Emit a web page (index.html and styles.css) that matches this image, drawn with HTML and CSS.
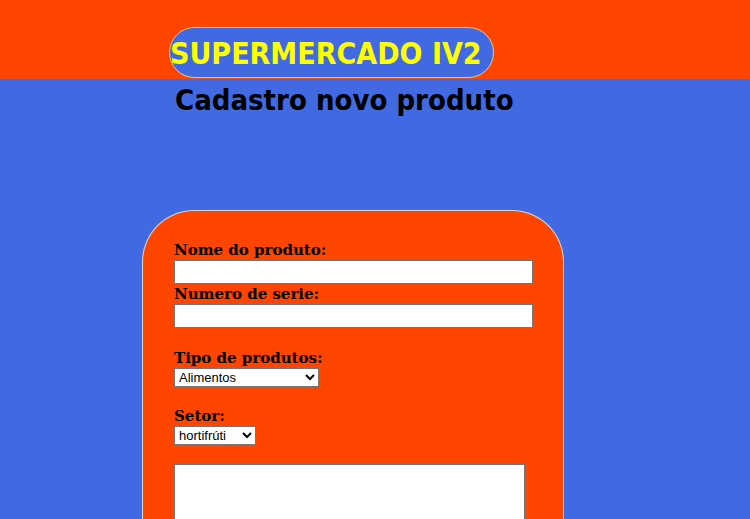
FILE: index.html
```html
<!DOCTYPE html>
<html lang="pt">
<head>
<meta charset="utf-8">
<title>Supermercado IV2</title>
<link rel="stylesheet" href="styles.css">
</head>
<body>
<header class="topo">
  <div class="marca">SUPERMERCADO IV2</div>
</header>
<h1 class="titulo">Cadastro novo produto</h1>
<form class="cadastro">
  <label class="rotulo" for="nome">Nome do produto:</label>
  <input class="campo" id="nome" type="text">
  <label class="rotulo" for="serie">Numero de serie:</label>
  <input class="campo" id="serie" type="text">
  <label class="rotulo espaco" for="tipo">Tipo de produtos:</label>
  <select class="escolha tipo" id="tipo"><option>Alimentos</option></select>
  <label class="rotulo espaco2" for="setor">Setor:</label>
  <select class="escolha setor" id="setor"><option>hortifrúti</option></select>
  <textarea class="texto"></textarea>
</form>
</body>
</html>
```

FILE: styles.css
```css
html, body {
  margin: 0;
  padding: 0;
}
body {
  background: #4169e1;
  font-family: "DejaVu Sans", sans-serif;
}
.topo {
  background: #ff4500;
  height: 79px;
  box-sizing: border-box;
  padding: 27px 0 0 169px;
}
.marca {
  display: inline-flex;
  align-items: center;
  box-sizing: border-box;
  width: 325px;
  height: 51px;
  padding-top: 2px;
  border: 1px solid #e8d070;
  border-radius: 26px;
  background: #4169e1;
  color: #ffff00;
  font-family: "DejaVu Sans Condensed", "DejaVu Sans", sans-serif;
  font-weight: bold;
  font-size: 30px;
  white-space: nowrap;
}
.titulo {
  margin: 4px 0 0 175px;
  font-size: 29px;
  font-weight: bold;
  font-family: "DejaVu Sans Condensed", "DejaVu Sans", sans-serif;
  color: #000;
  line-height: 34px;
}
.cadastro {
  display: flex;
  flex-direction: column;
  align-items: flex-start;
  box-sizing: border-box;
  width: 422px;
  margin: 93px 0 0 142px;
  padding: 29px 30px 20px 31px;
  background: #ff4500;
  border: 1px solid #d8d8d8;
  border-bottom: none;
  border-radius: 52px 52px 0 0;
  min-height: 320px;
}
.rotulo {
  font-family: "DejaVu Serif", serif;
  font-weight: bold;
  font-size: 15px;
  line-height: 20px;
  color: #000;
}
.espaco {
  margin-top: 20px;
}
.espaco2 {
  margin-top: 19px;
}
.campo {
  box-sizing: border-box;
  width: 359px;
  height: 24px;
  margin: 0;
  border: 1px solid #767676;
  background: #fff;
}
.escolha {
  box-sizing: border-box;
  height: 19px;
  margin: 0;
  font-family: "Liberation Sans", Arial, sans-serif;
  font-size: 13px;
  border: 1px solid #767676;
  background: #fff;
  border-radius: 0;
}
.tipo { width: 145px; }
.setor { width: 82px; }
.texto {
  box-sizing: border-box;
  width: 351px;
  height: 90px;
  margin: 19px 0 0 0;
  border: 1px solid #767676;
  resize: none;
}
```
